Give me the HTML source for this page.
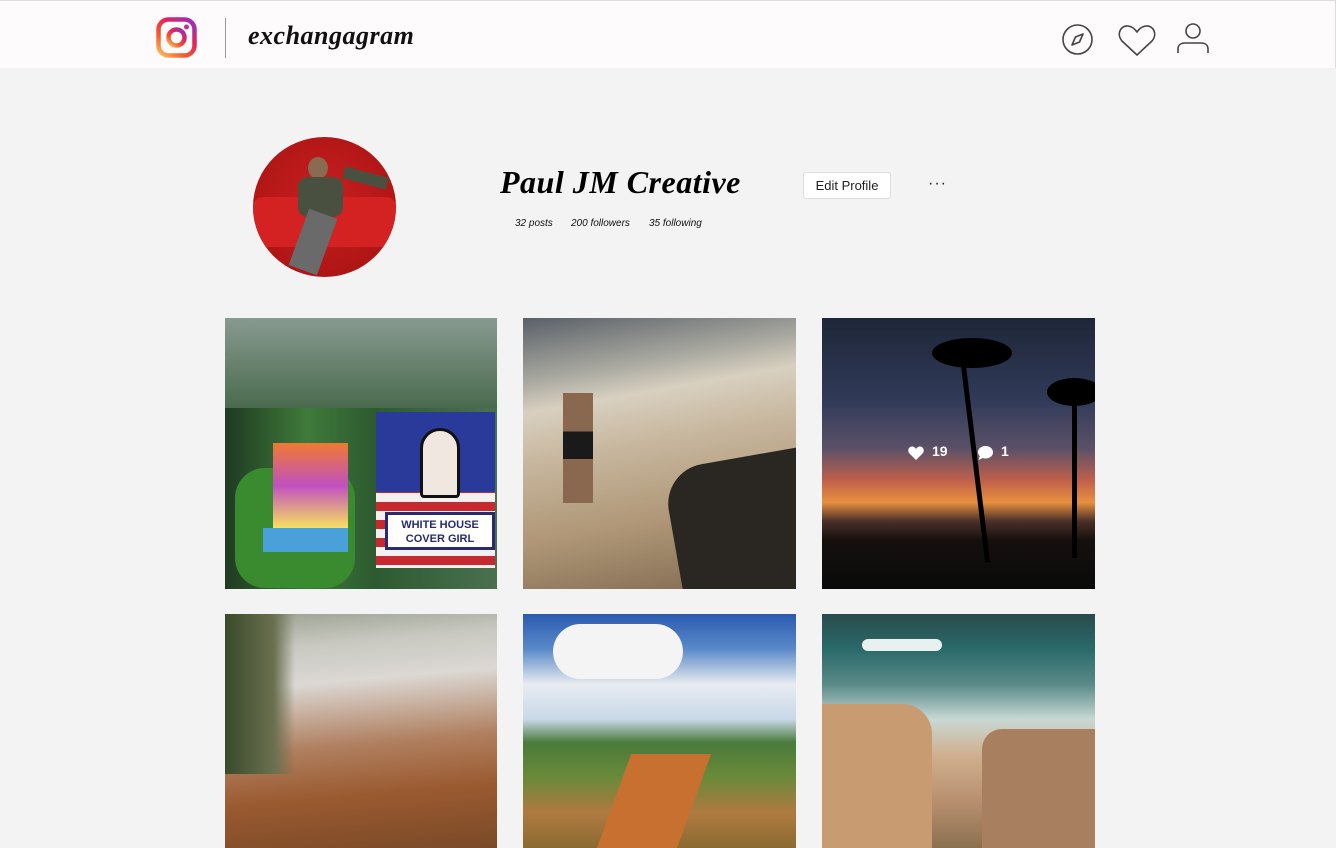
<!DOCTYPE html>
<html><head><meta charset="utf-8"><style>
*{margin:0;padding:0;box-sizing:border-box}
body{width:1336px;height:848px;overflow:hidden;background:#f3f3f3;font-family:"Liberation Sans",sans-serif;position:relative}
.hdr{position:absolute;left:0;top:0;width:1336px;height:68px;background:#fdfbfc;border-top:1px solid #ddd;border-right:1px solid #ddd}
.logo{position:absolute;left:156px;top:16px}
.sep{position:absolute;left:225px;top:17px;width:1px;height:40px;background:#999}
.brand{position:absolute;left:248px;top:20px;font-family:"URW Chancery L","Z003","Liberation Serif",cursive;font-style:italic;font-weight:bold;font-size:26px;color:#111;letter-spacing:0.5px}
.ic{position:absolute}
.av{position:absolute;left:253px;top:137px;width:143px;height:140px;border-radius:50%;background:radial-gradient(circle at 50% 45%,#c82020,#b01515 70%);overflow:hidden}
.name{position:absolute;left:500px;top:164px;font-family:"URW Chancery L","Z003","Liberation Serif",cursive;font-style:italic;font-weight:bold;font-size:32px;color:#000;letter-spacing:0.5px}
.edit{position:absolute;left:803px;top:172px;width:88px;height:27px;background:#fff;border:1px solid #ddd;border-radius:3px;font-size:13px;color:#222;text-align:center;line-height:26px}
.dots{position:absolute;left:928px;top:175px;font-size:16px;color:#222;letter-spacing:1px}
.stats{position:absolute;top:218px;font-size:10px;font-style:italic;color:#111}
.ph{position:absolute;overflow:hidden}
</style></head><body>
<div class="hdr">
<svg class="logo" width="41" height="41" viewBox="0 0 41 41"><defs><linearGradient id="g" x1="0" y1="1" x2="0.8" y2="0"><stop offset="0" stop-color="#fdc35a"/><stop offset=".35" stop-color="#f35a2e"/><stop offset=".7" stop-color="#e2255a"/><stop offset="1" stop-color="#a22fb0"/></linearGradient></defs>
<rect x="2.5" y="2.5" width="36" height="36" rx="10" fill="none" stroke="url(#g)" stroke-width="4.5"/><circle cx="20.5" cy="20.5" r="8" fill="none" stroke="url(#g)" stroke-width="4.5"/><circle cx="30.5" cy="10" r="2.5" fill="#c52d8f"/></svg>
<div class="sep"></div>
<div class="brand">exchangagram</div>
<svg class="ic" style="left:1061px;top:22px" width="33" height="33" viewBox="0 0 33 33"><circle cx="16.5" cy="16.5" r="14.5" fill="none" stroke="#444" stroke-width="1.6"/><path d="M22 11 L18.5 19 L11 22 L14.5 14 Z" fill="none" stroke="#444" stroke-width="1.6" stroke-linejoin="round"/></svg>
<svg class="ic" style="left:1117px;top:23px" width="40" height="33" viewBox="0 0 40 33"><path d="M20 31 L5 17 C-1 10 4 1 11 2 C15 2.5 18 5 20 8 C22 5 25 2.5 29 2 C36 1 41 10 35 17 Z" fill="none" stroke="#444" stroke-width="1.6" stroke-linejoin="round"/></svg>
<svg class="ic" style="left:1176px;top:21px" width="34" height="32" viewBox="0 0 34 32"><circle cx="17" cy="9" r="7" fill="none" stroke="#444" stroke-width="1.6"/><path d="M2 31 V27 C2 23 5 21 9 21 H25 C29 21 32 23 32 27 V31" fill="none" stroke="#444" stroke-width="1.6"/></svg>
</div>
<div class="av"><div style="position:absolute;left:0;top:60px;width:143px;height:50px;background:#d42222;border-radius:10px"></div><div style="position:absolute;left:55px;top:20px;width:20px;height:22px;border-radius:50%;background:#8a6a50"></div><div style="position:absolute;left:45px;top:40px;width:45px;height:40px;background:#4a5040;border-radius:10px"></div><div style="position:absolute;left:90px;top:35px;width:45px;height:12px;background:#4a5040;transform:rotate(15deg)"></div><div style="position:absolute;left:45px;top:75px;width:30px;height:60px;background:#6a6a6a;transform:rotate(20deg)"></div></div>
<div class="name">Paul JM Creative</div>
<div class="edit">Edit Profile</div>
<div class="dots">···</div>
<div class="stats" style="left:515px">32 posts</div>
<div class="stats" style="left:571px">200 followers</div>
<div class="stats" style="left:649px">35 following</div>

<div class="ph" style="left:225px;top:318px;width:272px;height:271px;background:linear-gradient(90deg,#1f3a22,#3f7a3a 30%,#2d5a30 55%,#4a7050);">
 <div style="position:absolute;left:0;top:0;width:272px;height:90px;background:linear-gradient(180deg,#889a90,#4a6a4e)"></div>
 <div style="position:absolute;left:10px;top:150px;width:120px;height:120px;background:#3a8a30;border-radius:30px"></div>
 <div style="position:absolute;left:48px;top:125px;width:75px;height:85px;background:linear-gradient(#f07a30,#c050c0 50%,#f8e060)"></div>
 <div style="position:absolute;left:38px;top:210px;width:85px;height:24px;background:#4aa0d8"></div>
 <div style="position:absolute;left:151px;top:94px;width:119px;height:156px;background:repeating-linear-gradient(180deg,#c82830 0 9px,#f4f0f0 9px 18px)"></div>
 <div style="position:absolute;left:151px;top:94px;width:119px;height:80px;background:#2a3a9a"></div>
 <div style="position:absolute;left:195px;top:110px;width:40px;height:70px;background:#f0e8e0;border-radius:20px 20px 4px 4px;border:3px solid #111"></div>
 <div style="position:absolute;left:160px;top:194px;width:110px;height:38px;background:#fff;border:3px solid #2a2a70;font-size:11px;font-weight:bold;color:#2a2a70;text-align:center;line-height:14px;padding-top:3px">WHITE HOUSE<br>COVER GIRL</div>
</div>
<div class="ph" style="left:523px;top:318px;width:273px;height:271px;background:linear-gradient(170deg,#5a6068 0%,#a8a8a0 20%,#d8d0c0 30%,#c8b8a0 45%,#b09878 70%,#806850 100%)">
 <div style="position:absolute;left:150px;top:140px;width:140px;height:140px;background:#2a2622;border-radius:40px 0 0 0;transform:rotate(-10deg)"></div>
 <div style="position:absolute;left:40px;top:75px;width:30px;height:110px;background:linear-gradient(#8a6850 0 35%,#1a1a1a 35% 60%,#8a6850 60%)"></div>
</div>
<div class="ph" style="left:822px;top:318px;width:273px;height:271px;background:linear-gradient(180deg,#1e2638 0%,#303a58 30%,#5a5068 48%,#c0604a 60%,#e89040 68%,#4a3028 75%,#15100e 82%,#0a0a0a 100%)">
 <div style="position:absolute;left:150px;top:30px;width:5px;height:215px;background:#000;transform:rotate(-7deg)"></div>
 <div style="position:absolute;left:110px;top:20px;width:80px;height:30px;background:#000;border-radius:50%"></div>
 <div style="position:absolute;left:225px;top:60px;width:55px;height:28px;background:#000;border-radius:50%"></div>
 <div style="position:absolute;left:250px;top:80px;width:5px;height:160px;background:#000"></div>
 <svg style="position:absolute;left:86px;top:128px" width="16" height="14" viewBox="0 0 16 14"><path d="M8 14 L1.5 7.5 C-1 5 0.5 0.5 4 0.5 C6 0.5 7.3 1.8 8 3 C8.7 1.8 10 0.5 12 0.5 C15.5 0.5 17 5 14.5 7.5 Z" fill="#fff"/></svg>
 <div style="position:absolute;left:110px;top:125px;color:#fff;font-size:14px;font-weight:bold">19</div>
 <svg style="position:absolute;left:155px;top:127px" width="17" height="16" viewBox="0 0 17 16"><path d="M8.5 1 C13 1 16 3.8 16 7.3 C16 10.8 13 13.5 8.5 13.5 C7.5 13.5 6.5 13.3 5.8 13 L1.5 15 L2.8 11.2 C1.6 10 1 8.7 1 7.3 C1 3.8 4 1 8.5 1Z" fill="#fff"/></svg>
 <div style="position:absolute;left:179px;top:125px;color:#fff;font-size:14px;font-weight:bold">1</div>
</div>
<div class="ph" style="left:225px;top:614px;width:272px;height:234px;background:linear-gradient(175deg,#9aa090 0%,#c8c8c0 15%,#dcd8d4 30%,#b08060 55%,#9a5a30 75%,#7a4a28 100%)">
 <div style="position:absolute;left:0;top:0;width:70px;height:160px;background:linear-gradient(90deg,#3a4a2a,#6a7050 70%,transparent)"></div>
</div>
<div class="ph" style="left:523px;top:614px;width:273px;height:234px;background:linear-gradient(180deg,#2a5ab0 0%,#5a8ac8 15%,#e8ecf0 30%,#c8d8e8 45%,#4a7a3a 55%,#6a8a3a 70%,#b07a40 85%,#8a6a30 100%)">
 <div style="position:absolute;left:30px;top:10px;width:130px;height:55px;background:#f4f4f4;border-radius:30px"></div>
 <div style="position:absolute;left:90px;top:140px;width:80px;height:100px;background:#c87030;transform:skewX(-20deg)"></div>
</div>
<div class="ph" style="left:822px;top:614px;width:273px;height:234px;background:linear-gradient(180deg,#2a4a4a 0%,#2a6a6a 15%,#5a8a88 30%,#c8d8d4 45%,#d0b090 60%,#b89070 80%,#8a7050 100%)">
 <div style="position:absolute;left:40px;top:25px;width:80px;height:12px;background:#e8f0f0;border-radius:6px"></div>
 <div style="position:absolute;left:0;top:90px;width:110px;height:144px;background:#c89c70;border-radius:0 30px 0 0"></div>
 <div style="position:absolute;left:160px;top:115px;width:113px;height:120px;background:#a88060;border-radius:20px 0 0 0"></div>
</div>
</body></html>
